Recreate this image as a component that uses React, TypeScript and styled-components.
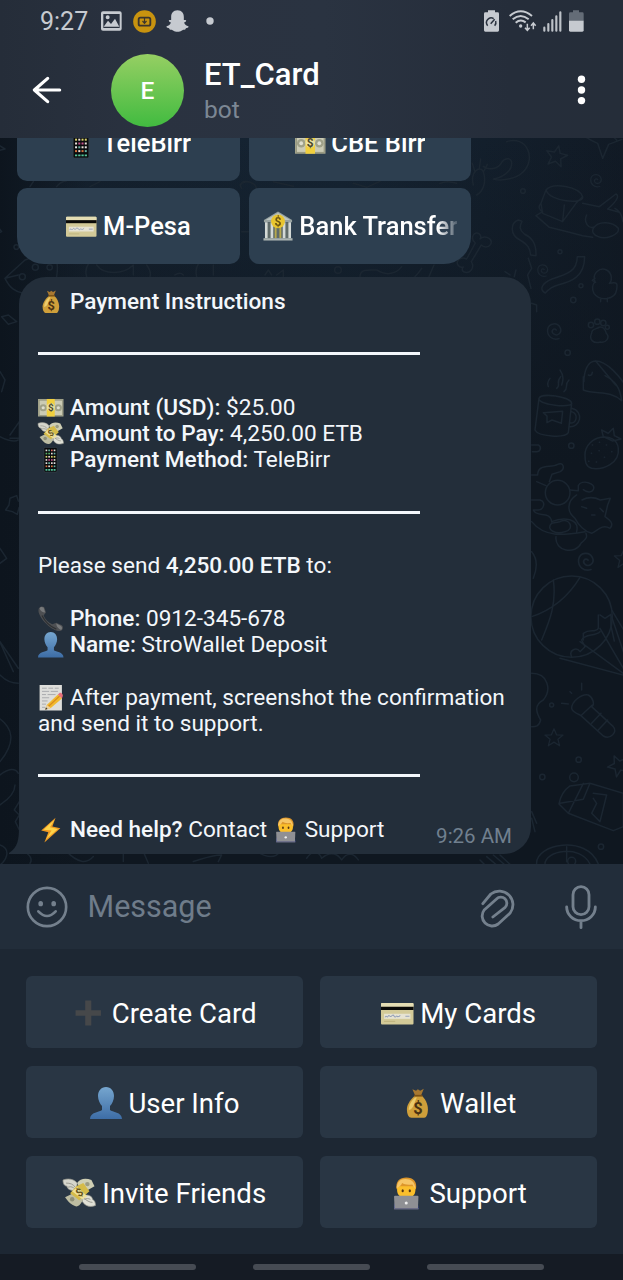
import React from "react";
import styled, { createGlobalStyle } from "styled-components";

const GlobalStyle = createGlobalStyle`
  * { box-sizing: border-box; }
  body {
    margin: 0;
    background: #1d2733;
    font-family: Roboto, "Noto Sans", sans-serif;
    color: #f3f7fb;
  }
  svg { display: block; flex: none; }
`;

/* ---------- layout ---------- */

const Screen = styled.div`
  width: 623px;
  height: 1280px;
  display: flex;
  flex-direction: column;
  overflow: hidden;
`;

const Header = styled.header`
  flex: none;
  height: 138px;
  background: linear-gradient(90deg, #252d39 0%, #2a3240 24%, #2a3341 52%, #252d3a 82%, #252d39 100%);
`;

const StatusBar = styled.div`
  height: 42px;
  padding: 0 39px 0 40px;
  display: flex;
  align-items: center;
  color: #c6cad0;
`;

const Clock = styled.span`
  font-size: 25px;
  line-height: 30px;
  width: 49px;
  margin-top: 2px;
  white-space: nowrap;
`;

const StatusIcon = styled.svg<{ $gap: number }>`
  margin-left: ${(p) => p.$gap}px;
`;

const Spacer = styled.div`
  flex: 1;
`;

const TitleBar = styled.div`
  height: 96px;
  padding: 0 37px 0 32px;
  display: flex;
  align-items: center;
`;

const Avatar = styled.div`
  width: 73px;
  height: 73px;
  margin-left: 49px;
  border-radius: 50%;
  display: flex;
  align-items: center;
  justify-content: center;
  background: linear-gradient(#96cf63, #41bb40);
  color: #fff;
  font-size: 24.5px;
  font-weight: 500;
`;

const TitleText = styled.div`
  flex: 1;
  margin: 2px 0 0 20px;
`;

const Title = styled.div`
  font-size: 31px;
  line-height: 34px;
  font-weight: 500;
  color: #fff;
`;

const Subtitle = styled.div`
  font-size: 24.5px;
  line-height: 30px;
  margin-top: 3px;
  color: #7c8794;
`;

const Chat = styled.main`
  position: relative;
  flex: none;
  height: 726px;
  padding: 0 0 10px 17px;
  display: flex;
  flex-direction: column;
  justify-content: flex-end;
  overflow: hidden;
  background: linear-gradient(90deg, #0d151e 0%, rgba(13, 21, 30, 0) 14%),
    linear-gradient(180deg, rgba(15, 23, 32, 0) 0%, #0f1720 45%),
    linear-gradient(90deg, #14202d 0%, #152433 55%, #111a25 100%);
`;

const Doodles = styled.svg`
  position: absolute;
  inset: 0;
  fill: none;
  stroke: #1b2631;
  stroke-width: 4.5;
  stroke-linecap: round;
  stroke-linejoin: round;
`;

const InlineKeyboard = styled.div`
  position: relative;
  flex: none;
  display: grid;
  grid-template-columns: 223px 222px;
  grid-auto-rows: 76px;
  gap: 7px 9px;
  margin-bottom: 13px;
`;

const InlineButton = styled.button<{ $corner?: "left" | "right" }>`
  border: 0;
  padding: 0 14px;
  background: #2d3f50;
  border-radius: 10px;
  border-bottom-left-radius: ${(p) => (p.$corner === "left" ? 27 : 10)}px;
  border-bottom-right-radius: ${(p) => (p.$corner === "right" ? 27 : 10)}px;
  color: #fff;
  font: 500 25.5px/30px Roboto, "Noto Sans", sans-serif;
  display: flex;
  align-items: center;
  justify-content: center;
  overflow: hidden;
`;

const InlineLabel = styled.span<{ $fade?: boolean }>`
  min-width: 0;
  overflow: hidden;
  white-space: nowrap;
  mask-image: ${(p) => (p.$fade ? "linear-gradient(90deg, #000 90%, transparent 102%)" : "none")};
`;

const Bubble = styled.article`
  position: relative;
  flex: none;
  width: 512px;
  height: 577px;
  margin-left: 2px;
  padding: 12px 19px 0;
  border-radius: 27px 27px 27px 0;
  background: #232e3a;
`;

const Tail = styled.svg`
  position: absolute;
  left: -10px;
  bottom: 0;
`;

const Line = styled.p`
  margin: 0;
  height: 26.38px;
  font-size: 22.6px;
  line-height: 26.38px;
  white-space: nowrap;

  b { font-weight: 500; }
  svg { margin-right: 0.8px; }
`;

const Rule = styled.div`
  height: 26.38px;
  padding-top: 10.5px;

  &::after {
    content: "";
    display: block;
    width: 382px;
    height: 3px;
    background: #f3f7fb;
  }
`;

const Time = styled.time`
  position: absolute;
  right: 19px;
  bottom: 6px;
  font-size: 20.5px;
  line-height: 24px;
  color: #71808f;
`;

const Glyph = styled.svg<{ $size: number; $drop: number }>`
  display: inline-block;
  width: ${(p) => p.$size}px;
  height: ${(p) => p.$size}px;
  vertical-align: ${(p) => -p.$drop}px;
  overflow: visible;
`;

const Composer = styled.div`
  flex: none;
  height: 85px;
  padding: 1px 26px 0;
  display: flex;
  align-items: center;
  background: #222d3a;
`;

const Placeholder = styled.span`
  flex: 1;
  margin-left: 19.5px;
  font-size: 30.5px;
  line-height: 36px;
  color: #6f7c8a;
`;

const MicSlot = styled.div`
  margin-left: 48px;
`;

const Keyboard = styled.div`
  flex: none;
  height: 305px;
  padding: 27px 26px 0;
  display: grid;
  grid-template-columns: 1fr 1fr;
  grid-auto-rows: 72px;
  gap: 18px 17px;
  background: #1d2733;
`;

const Key = styled.button`
  border: 0;
  border-radius: 6px;
  padding: 4px 0 0;
  background: #293644;
  color: #fff;
  font: 400 27.6px/36px Roboto, "Noto Sans", sans-serif;
  white-space: nowrap;
`;

const NavBar = styled.nav`
  flex: none;
  height: 26px;
  display: flex;
  justify-content: center;
  gap: 57px;
  padding-top: 10px;
  background: #151b24;
`;

const NavPill = styled.span`
  width: 117px;
  height: 6px;
  border-radius: 3px;
  background: #464b53;
`;

/* ---------- emoji ---------- */

type EmojiName =
  | "bag" | "note" | "wings" | "mobile" | "receiver" | "person"
  | "memo" | "bolt" | "tech" | "card" | "bank" | "plus";

const art: Record<EmojiName, React.ReactNode> = {
  bag: (
    <g transform="translate(2.200 .8) scale(.9 .95)">
      <path d="M10 1.500 14 3 16 1.500 18.500 3 22.500 1 19.500 8 13 8Z" fill="#a87830" />
      <path d="M13 8h7c4 3 7 9 7 14 0 6-2 9-4 9H9c-3 0-5-3-5-9 0-5 5-11 9-14Z" fill="#cf9f3a" />
      <path d="M13 10c-4 3-7 8-7 13 6-1 6-9 9-13Z" fill="#eccb6c" />
      <path d="M12 8.200h9" stroke="#7b5014" strokeWidth="1.800" />
      <text x="16" y="27" textAnchor="middle" fontSize="18" fontWeight="700" fill="#4a3212" fontFamily="Roboto, sans-serif">$</text>
    </g>
  ),
  note: (
    <>
      <rect x="0" y="5" width="32" height="22" fill="#a3a48b" />
      <rect x="1.500" y="6.500" width="29" height="19" fill="#cbcbb5" stroke="#8f917a" strokeWidth=".8" />
      <circle cx="6.500" cy="16" r="4.500" fill="#9fa189" />
      <circle cx="25.500" cy="16" r="4.500" fill="#9fa189" />
      <circle cx="6.500" cy="16" r="2" fill="#deded0" />
      <circle cx="25.500" cy="16" r="2" fill="#deded0" />
      <rect x="11" y="5" width="10" height="22" fill="#f0cf3e" />
      <circle cx="16" cy="15.500" r="5" fill="#e9dfa0" />
      <text x="16" y="20" textAnchor="middle" fontSize="12.500" fontWeight="700" fill="#4d4a2b" fontFamily="Roboto, sans-serif">$</text>
    </>
  ),
  wings: (
    <>
      <path d="M0 3c5-2 11-1 14 3l-1 7C8 14 4 12 4 9 1 9 0 6 0 3Z" fill="#d6d6cc" stroke="#9a9a90" strokeWidth=".7" />
      <path d="M32 28c-5 2-10 1-13-4l1-6c5-1 9 1 9 4 2 1 3 3 3 6Z" fill="#e0e0d6" stroke="#9a9a90" strokeWidth=".7" />
      <path d="M3 6c4 0 7 1 9 4M5 10c3-1 5 0 7 2M29 25c-3 0-6-2-8-4M27 22c-2-1-4-1-6 0" stroke="#96968c" strokeWidth=".9" fill="none" />
      <path d="M14 6c3-5 9-5 14-3l3 6-12 7Z" fill="#cfcfb4" />
      <path d="m2 20 10-5 8 7c-2 4-4 7-7 7-5-1-8-5-11-9Z" fill="#bdbda2" />
      <path d="m13 9 7-3 6 8-10 9-9-7Z" fill="#d5bb48" />
      <path d="m14 10 10 9-5 3-10-8Z" fill="#efe19a" />
      <circle cx="24" cy="7" r="2.200" fill="#9b9c83" />
      <circle cx="9" cy="22" r="2.200" fill="#8f9078" />
      <text x="16" y="19" textAnchor="middle" fontSize="11" fontWeight="700" fill="#66551c" fontFamily="Roboto, sans-serif" transform="rotate(-35 16 15)">$</text>
    </>
  ),
  mobile: (
    <>
      <rect x="7.500" y="0.500" width="16.500" height="31" rx="1.600" fill="#090b0d" stroke="#39434a" strokeWidth=".8" />
      {["#d6625a", "#5bb46a", "#d9d36c", "#c44f8a", "#e8e8e8", "#d8733e"].map((c, r) =>
        [0, 1, 2, 3].map((k) => (
          <rect key={`${r}-${k}`} x={9.5 + k * 3.4} y={3.2 + r * 4} width="2.100" height="2.100"
            fill={(r + k) % 3 === 0 ? "#e9ded8" : (r * 2 + k) % 4 === 1 ? "#67b2a4" : c} />
        ))
      )}
      <path d="M9.400 28.700h2.400M12.800 28.700h2.400M16.200 28.700h2.400M19.600 28.700h2.400" stroke="#54c49a" strokeWidth="2" />
    </>
  ),
  receiver: (
    <>
      <path d="M1 3c2-3 5-3 7-1l2 6-3 4c2 5 6 9 11 11l5-2 7 3c2 2 2 5-1 7-4 2-12-2-18-8C4 16-1 8 1 3Z" fill="#4d4f52" />
      <path d="M2 3c1-2 3-2 5-1l2 6c-3 0-6-2-7-5ZM23 22l6 3c2 2 1 4 0 5-3-1-6-4-6-8Z" fill="#77797b" />
      <path d="M5 12c4 8 10 14 18 17" stroke="#2f3133" strokeWidth="1.600" fill="none" />
    </>
  ),
  person: (
    <>
      <defs>
        <linearGradient id="person" x1="0" y1="0" x2="0" y2="1">
          <stop offset="0" stopColor="#76a6cf" />
          <stop offset="1" stopColor="#3d6da6" />
        </linearGradient>
      </defs>
      <path d="M16 0c5 0 8 4 8 9 0 4-2 8-4 10v4c2 2 12 2 12 9H0c0-7 10-7 12-9v-4c-2-2-4-6-4-10 0-5 3-9 8-9Z" fill="url(#person)" />
    </>
  ),
  memo: (
    <>
      <path d="M2 0h28v32H2Z" fill="#dededb" />
      <path d="M5 4h6m2 0h6m2 0h5M5 8h9m2 0h9M5 12h5m2 0h10M5 16h9M5 20h7M5 24h5M5 28h4" stroke="#a4a5a8" strokeWidth="1.100" fill="none" />
      <path d="m11 25 14-13 5 5-14 12-7 2Z" fill="#f1b92e" />
      <path d="m13 27 14-13" stroke="#d98b1c" strokeWidth="1.600" />
      <path d="m25 12 2-2c2-1 5 2 4 4l-1 3Z" fill="#e8707c" />
      <path d="m11 25 5 4-7 2Z" fill="#ecd2a2" />
      <path d="m10 28-1 3 3-1Z" fill="#333" />
    </>
  ),
  bolt: (
    <>
      <path d="M22 1 4 17l9 2L8 32 28 14l-10-2Z" fill="#f09a22" />
      <path d="M21 3 7 16l10 1-7 11 15-13-10-2Z" fill="#fdd349" />
    </>
  ),
  tech: (
    <>
      <path d="M4 31.500c0-7 2-11 12-11s12 4 12 11Z" fill="#3d49a5" />
      <path d="M6.500 12C5 4 10 .5 16 .5c7 0 11 4 9.500 11.500Z" fill="#dd962a" />
      <path d="M7 9h18v4c0 5-4 8-9 8s-9-3-9-8Z" fill="#fbbf2b" />
      <path d="M6.500 11C7 5 10 2 15 2c6 0 9.500 3 10 9-1.500 0-2-2-3-3.500C17 8 14 7.500 12 6c-1 2.500-3 4-5.500 5Z" fill="#f6c667" />
      <ellipse cx="12.500" cy="13.500" rx="1.100" ry="1.500" fill="#543414" />
      <ellipse cx="19.500" cy="13.500" rx="1.100" ry="1.500" fill="#543414" />
      <path d="M5.500 18.500h21c1 0 1.500 0 1.500 1L27.500 31h-23L4 19.500c0-1 .5-1 1.500-1Z" fill="#8f9094" />
      <path d="M4 30.500h24V32H4Z" fill="#6b6c85" />
      <circle cx="16" cy="25.500" r="1.500" fill="#eee" />
    </>
  ),
  card: (
    <>
      <rect x="0" y="6" width="32" height="21" rx="1" fill="#d3ca98" />
      <rect x="0" y="6" width="32" height="4" rx="1" fill="#e4ddb3" />
      <rect x="0" y="9.600" width="32" height="3.200" fill="#0a0a08" />
      <rect x="3" y="16.500" width="26" height="5" fill="#e6e3d2" />
      <path d="M4 20c1-3 2 1 3-1s2 1 3 0 2-2 3 0 2-1 3 0 2 0 3-1M24 19h4" stroke="#96a1b8" strokeWidth="1" fill="none" />
      <path d="M3 24h11" stroke="#bfb47e" strokeWidth="1" />
    </>
  ),
  bank: (
    <>
      <path d="M1 9.500 16 .5l15 9v2.500H1Z" fill="#98a3a1" />
      <path d="M3 9.500 16 2 29 9.500Z" fill="#bcc5c2" />
      <rect x="3" y="12" width="26" height="17" fill="#5f6b69" />
      <path d="M3.500 12v17M9.500 12v17M22.500 12v17M28.500 12v17" stroke="#d3d9d6" strokeWidth="2.800" />
      <path d="M13.500 17v12M18.500 17v12" stroke="#b7a94c" strokeWidth="2" />
      <rect x="0.500" y="29" width="31" height="2.500" fill="#aab3b0" />
      <circle cx="16" cy="11" r="7.400" fill="#e8c52f" />
      <text x="16" y="15.800" textAnchor="middle" fontSize="13" fontWeight="700" fill="#6b5410" fontFamily="Roboto, sans-serif">$</text>
    </>
  ),
  plus: <path d="M13 3.500h6v9.500H28.500v5.500H19v9.500h-6v-9.500H3.500V13H13Z" fill="#46484a" />,
};

const Emoji = ({ name, size = 25.5 }: { name: EmojiName; size?: number }) => (
  <Glyph viewBox="0 0 32 32" $size={size} $drop={size * 0.2} aria-hidden="true">
    {art[name]}
  </Glyph>
);

/* ---------- chat wallpaper ---------- */

const star = "M0-30 9-9 32-8 14 7 20 30 0 17-20 30-14 7-32-8-9-9Z";
const spiral = "M4 2c-8-8-18 4-8 12 12 8 26-4 20-18-8-18-34-16-38 4-2 20 14 34 34 28";

const Wallpaper = () => (
  <Doodles width="623" height="726" viewBox="0 138 623 726" aria-hidden="true">
    <g transform="translate(240 135) scale(.3333)">
      <path d={star} transform="translate(950 62) rotate(12)" />
      <path d="M1035 5q25 15 38 20l15 45 18-42 40-15M1110-5l20 20" />
      <path d={spiral} transform="translate(1070 132) scale(.8)" />
      <path d="M800 20c60-20 90 50 50 90-20 20-60 30-90 22 30-5 55-25 55-45 2-20-20-20-30-5-10 20-40 25-55 12" />
      <path d="M700 150c-10-40 20-60 30-40 10 30 0 60-20 70M705 110l-8-25M718 100l4-28M732 108l10-20M600 145q20-10 50 0" />
      <circle cx="849" cy="168" r="7" /><circle cx="960" cy="350" r="6" />
      <path d="M918 165c20-25 100-10 110 20 5 25-100 15-110-20ZM918 165l-15 40 5 30 60 25 40-55 20-20M903 205c-10 10-5 20 5 25l-20 12 40 35 60 15 40 10 30 5M968 260l5-50M1028 205l50 10 50-38c10 5 5 20-25 45l35 10M1040 240c-10 20 5 45 25 35M1060 280c15-25 60-20 75 0 5 20-40 35-60 25-15-5-20-15-15-25ZM1125 220q20 10 24 40" />
      <path d="M835 255c-25 10-25 45 5 60 25 15 30 25 32 45l16 2c2-40-15-55-35-65-15-12-15-22-7-38Z" />
      <path d="M700 300c10-15 28 0 20 12 15-14 40 0 32 16-8 12-22 8-28 2l-30 50c10 15 0 35-18 32-12-2-10-12-6-16-12 4-25-10-14-22 8-8 20-4 24-2l26-48c-8-6-10-16-6-24Z" />
      <path d={spiral} transform="translate(910 402) scale(.75)" />
      <path d="M1012 365h22c0 60-40 75-80 85-20 5-30 15-38 24-20-10-10-30 20-42 50-15 75-25 76-67Z" />
      <path d="M1065 440c-10-25 15-45 35-35 20 12 15 35 8 40 25-5 25 0 22 20-5 30-50 35-68 10-8-15-5-25 3-35ZM1065 430l-8 6 10 6M1082 490v10M1102 490v10" />
      <circle cx="1023" cy="452" r="6" /><circle cx="1000" cy="495" r="8" /><circle cx="983" cy="653" r="8" />
      <path d={spiral} transform="translate(945 583)" />
      <path d="M1055 595c0-15 15-12 22-18 12-4 20 8 22 18 12 12 0 30-18 26-20 6-35-6-26-26Z" />
      <circle cx="1053" cy="570" r="8" /><circle cx="1072" cy="560" r="8" /><circle cx="1090" cy="564" r="8" /><circle cx="1102" cy="577" r="6" />
      <path d="M1032 740c0-30 10-62 35-62 35 0 75 50 90 75M1067 678l60 72M1045 720q10 5 12-8M960 705q15 20 5 45M865 370l10 30-12 20 10 40M810 420l-15-10M823 425l5-20M875 505l15 5v20" />
      <path d="M360 425c0-25 30-20 50-20 30 20 60 10 75-10M545 400q-10 15-20 25M582 390l-15 35M75 420l10-15 10 15M110 420l20-15v20" />
      <circle cx="294" cy="405" r="10" />
      <path d="M0 150c20-20 50-5 50 15M100 140l60 14M340 145l40 12 40-18" />
    </g>
    <g transform="translate(400 380) scale(.3333)">
      <path d="M417 55c5-18 95-5 98 15 0 15-100 5-98-15ZM417 55l-12 95c10 20 90 25 100 8l10-88M515 85c40 10 25 60-8 55M515 95c22 8 15 36-6 34" />
      <path d="M430 98l58-4-4 36-28-10-15 8v-20ZM445 20q-5-12 5-25M470 25c15-12-5-15 12-35M492 35c15-12 0-20 15-35M550-10v40c40 15 80 0 115 32-5-40-20-60-50-75" />
      <path d="M555 225c0-60 95-75 100-20 5 45-45 65-80 60-18-5-20-20-20-40ZM610 170l-5-20 20 10 15-15 3 22 20 10-25 6Z" />
      <path d="M577 195h1m20-8h1m20 8h1m15 20h1m-62 5h1m22-8h1m15 20h1m-48 12h1m22 2h1" />
      <circle cx="514" cy="197" r="8" />
      <path d="M395 195h20c12 8 5 22-8 20h-10M395 285h18c0-35 40-20 60-32 15-8 25 10 8 22l-25 8-8 22M410 305l28 12" />
      <circle cx="473" cy="338" r="37" />
      <path d="M510 330l25 2v-15c10-20 55-8 45 12-5 10-20 8-30 0M530 345c-30 20-30 50-5 70 10 20 30 40 50 45 15-5 30-30 55-15 15-15-5-28-15-35l8-35 8-20-30 5c-20-10-40-8-55 0M545 380l15 5M575 405h10M600 385l10 10M395 360h25c20 5 10 30-5 30h-15c10 25 50 0 55 35 35-15 85-10 75 30M455 430c-20 20 15 35 40 25 30-5 15-45-15-30ZM395 425c40 50 100 40 160 30M468 470c-5 45 60 55 75 20 15-15 20-15 15-30" />
      <path d={spiral} transform="translate(560 538) scale(1.1)" />
      <path d={star} transform="translate(672 535) scale(.9)" />
      <circle cx="515" cy="710" r="122" />
      <path d="M460 600c10 70-10 120-35 180M395 710c60-20 110-60 145-118M600 705l15 10 18-12v35l10 45M550 780v-20c20-15 35 0 45-15v-40M635 690l60 100M395 515q25 30 5 80" />
    </g>
    <g transform="translate(400 620) scale(.3333)">
      <path d="M515 110c-10-20 15-30 25-15l15-15-10-20c10-20 40-10 55-25M480 115l190 50M540 65l130 95M600 25l70 120M635-10l40 120M395 160c50 0 60 50 35 80-30 15-20 40-8 60-5 20-15 20-27 20M545 190v20M510 215l5 5M485 250l20 2" />
      <path d="M515 265c0-20 30-45 50-40 15 8 20 30 10 35l65 60c15 15-10 40-30 28l-68-62c-10-5-25-10-27-21ZM545 285l32-30M575 310l28-30M595 330l28-30" />
      <path d={star} transform="translate(462 352) scale(.85)" />
      <path d={star} transform="translate(655 435) rotate(-25) scale(1)" />
      <circle cx="536" cy="419" r="8" /><circle cx="427" cy="471" r="8" /><circle cx="522" cy="472" r="13" /><circle cx="603" cy="680" r="8" /><circle cx="455" cy="255" r="6" />
      <path d="M510 498l60-8 100 30v100l-30 12-135-52-28-28c5-25 20-45 33-54ZM505 580l45-90M480 550l70-12 20-48M580 520l40 5-20 80-25-25 15-30-10-15M395 575l15 35M395 595l10 40" />
      <path d="M410 732c-5-60 150-90 185 0M435 732c0-40 105-60 135 0M500 680v45M240 720l15 15M260 710l30 25M280 705l35 30M300 705l30 28" />
      <circle cx="515" cy="724" r="12" />
    </g>
    <g transform="translate(0 135) scale(.3333)">
      <path d="M-20 20 15 42l-30 8M-10 270l15 20-20 8M15 430l60-55 45-15c60 0 55 30 50 65M15 430c15 30 30 40 55 45M15 430l40-10" />
      <circle cx="67" cy="425" r="9" /><circle cx="106" cy="397" r="9" /><circle cx="149" cy="397" r="8" /><circle cx="49" cy="336" r="7" />
      <path d="M90 155l10-15M170 155q10-15 30-18M270 155l30-15M260 425c-5-15 0-30 5-38M290 390c20 30 80 30 110 0v30M440 390q15 20 10 35M590 425c-5-20 0-30 5-38M640 390v30M525 420q15-10 25 0M5 545l20-5 25 20-25 8ZM725 160c-10-15 5-25 22-20M725 290h20" />
      <path d="M-20 700l20 10 15 25-10 35M0 905q40 20 55 10M30 900l28-40v50H30M30 1090l20-8 5 16 20 5-18 15-5 20-15-8-20-5 10-15ZM0 1240l20 30-20 15" />
      <path d="M-10 1500l50 110M0 1520l55 80M0 1620c20 20 40 25 55 25M-10 1745q80 50 10 135M0 1920q40-30 55-5M0 2010q45-30 45-60M0 2130c30 10 25 40 0 60M58 2000l-15 25 15 15-12 20 12 25" />
      <path d="M80 2155q20 15 10 30M200 2150q50 50 80 15M370 2150v30M430 2150l15 35M580 2180c20-5 50-20 85-20l-10 20M770 2150q50 30 70 0M920 2170c20-30 40-15 45 0 30-25 50-10 60 5 20-30 40-15 50 0" />
    </g>
  </Doodles>
);

/* ---------- screen ---------- */

export default function App() {
  return (
    <>
      <GlobalStyle />
      <Screen>
        <Header>
          <StatusBar>
            <Clock>9:27</Clock>
            <StatusIcon $gap={12} width="21" height="20" viewBox="303 32 63 60">
              <path fillRule="evenodd" fill="currentColor" d="M309 33h50q6 0 6 6v46q0 6-6 6h-50q-6 0-6-6V39q0-6 6-6Zm1 8v42h49V41Zm1 38 13-18 9 10 12-16 13 24Zm6-28a6 6 0 1 0 12 0 6 6 0 1 0-12 0Z" />
            </StatusIcon>
            <StatusIcon $gap={11} width="23" height="23" viewBox="399 28 69 69">
              <circle cx="433.500" cy="62.500" r="34" fill="#c8930f" />
              <rect x="416" y="51" width="35" height="24" rx="5" fill="none" stroke="#3b352d" strokeWidth="5.500" />
              <path d="M433.500 50v17m-6-6 6 7 6-7" fill="none" stroke="#3b352d" strokeWidth="3.500" />
            </StatusIcon>
            <StatusIcon $gap={10} width="23" height="22" viewBox="499 30 68 66">
              <path fill="currentColor" d="M533 31c13 0 19 9 19 20v9c3 0 7-1 7 2s-6 4-6 6c2 6 6 9 13 11 1 5-5 5-8 6-1 3-1 4-4 4-7-1-9 6-21 6s-14-7-21-6c-3 0-3-1-4-4-3-1-9-1-8-6 7-2 11-5 13-11 0-2-6-3-6-6s4-2 7-2v-9c0-11 6-20 19-20Z" />
            </StatusIcon>
            <StatusIcon $gap={17} width="8" height="8" viewBox="0 0 8 8">
              <circle cx="4" cy="4" r="3.700" fill="currentColor" />
            </StatusIcon>
            <Spacer />
            <StatusIcon $gap={0} width="15" height="22" viewBox="516 29 45 66">
              <path fill="currentColor" d="M528 30h21v6h8q4 0 4 4v50q0 4-4 4h-37q-4 0-4-4V40q0-4 4-4h8Z" />
              <path d="M527 76a14 14 0 0 1 18-21M551 62a14 14 0 0 1-3 14M536 70l12-13" fill="none" stroke="#2a323f" strokeWidth="4.500" />
            </StatusIcon>
            <StatusIcon $gap={10} width="28" height="22" viewBox="590 29 84 66">
              <path d="M592 47q33-28 67 0M601 57q24-20 48 0M610 67q15-12 30-1" fill="none" stroke="currentColor" strokeWidth="6" />
              <circle cx="625" cy="77" r="5" fill="currentColor" />
              <path d="M645 70v19m-7-7 7 8 7-8M663 87V68m-7 8 7-8 7 8" fill="none" stroke="currentColor" strokeWidth="4.500" />
            </StatusIcon>
            <StatusIcon $gap={6} width="19" height="21" viewBox="694 33 57 63">
              <path d="M698 92V83M710 92V72M722 92V60M734 92V49M746 92V37" stroke="currentColor" strokeWidth="6.500" strokeLinecap="round" opacity=".95" />
            </StatusIcon>
            <StatusIcon $gap={7.5} width="15" height="22" viewBox="775 29 45 66">
              <path fill="#646c77" d="M787 30h18v6h10q4 0 4 4v22h-44V40q0-4 4-4h8Z" />
              <path fill="currentColor" d="M775 61h44v29q0 4-4 4h-36q-4 0-4-4Z" />
            </StatusIcon>
          </StatusBar>
          <TitleBar>
            <svg width="30" height="28" viewBox="97 228 90 84" fill="none" stroke="#fff" strokeWidth="9.500" strokeLinecap="round" strokeLinejoin="round">
              <path d="M180 270h-76M144 235l-40 35 40 35" />
            </svg>
            <Avatar>E</Avatar>
            <TitleText>
              <Title>ET_Card</Title>
              <Subtitle>bot</Subtitle>
            </TitleText>
            <svg width="9" height="30" viewBox="0 0 9 30" fill="#fff">
              <circle cx="4.500" cy="4.300" r="3.700" />
              <circle cx="4.500" cy="15" r="3.700" />
              <circle cx="4.500" cy="25.600" r="3.700" />
            </svg>
          </TitleBar>
        </Header>

        <Chat>
          <Wallpaper />
          <InlineKeyboard>
            <InlineButton><InlineLabel><Emoji name="mobile" size={30.5} /> TeleBirr</InlineLabel></InlineButton>
            <InlineButton><InlineLabel><Emoji name="note" size={30.5} /> CBE Birr</InlineLabel></InlineButton>
            <InlineButton $corner="left"><InlineLabel><Emoji name="card" size={30.5} /> M-Pesa</InlineLabel></InlineButton>
            <InlineButton $corner="right"><InlineLabel $fade><Emoji name="bank" size={30} /> Bank Transfer</InlineLabel></InlineButton>
          </InlineKeyboard>

          <Bubble>
            <Tail width="11" height="28" viewBox="0 0 11 28">
              <path d="M11 0h-1c0 14-1 21-10 27v1h11Z" fill="#232e3a" />
            </Tail>
            <Line><Emoji name="bag" /> <b>Payment Instructions</b></Line>
            <Line />
            <Rule />
            <Line />
            <Line><Emoji name="note" /> <b>Amount (USD):</b> $25.00</Line>
            <Line><Emoji name="wings" /> <b>Amount to Pay:</b> 4,250.00 ETB</Line>
            <Line><Emoji name="mobile" /> <b>Payment Method:</b> TeleBirr</Line>
            <Line />
            <Rule />
            <Line />
            <Line>Please send <b>4,250.00 ETB</b> to:</Line>
            <Line />
            <Line><Emoji name="receiver" /> <b>Phone:</b> 0912-345-678</Line>
            <Line><Emoji name="person" /> <b>Name:</b> StroWallet Deposit</Line>
            <Line />
            <Line><Emoji name="memo" /> After payment, screenshot the confirmation</Line>
            <Line>and send it to support.</Line>
            <Line />
            <Rule />
            <Line />
            <Line><Emoji name="bolt" /> <b>Need help?</b> Contact <Emoji name="tech" /> Support</Line>
            <Time>9:26 AM</Time>
          </Bubble>
        </Chat>

        <Composer>
          <svg width="42" height="42" viewBox="77 411 126 126" fill="none" stroke="#74808d" strokeWidth="8" strokeLinecap="round">
            <circle cx="140" cy="474" r="57.500" />
            <path d="M114 487q26 28 52 0" />
            <ellipse cx="121" cy="464" rx="7" ry="8" fill="#74808d" stroke="none" />
            <ellipse cx="160" cy="464" rx="7" ry="8" fill="#74808d" stroke="none" />
          </svg>
          <Placeholder>Message</Placeholder>
          <svg width="38" height="43" viewBox="180 108 111 129" fill="none" stroke="#74808d" strokeWidth="8.500" strokeLinecap="round" strokeLinejoin="round">
            <path d="M190 161 214 132A41 41 0 0 1 272 189L236 222A30 30 0 0 1 194 180L231 147A18 18 0 0 1 257 172L220 201" />
          </svg>
          <MicSlot>
            <svg width="32" height="46" viewBox="436 105 96 138" fill="none" stroke="#74808d" strokeWidth="8.500" strokeLinecap="round">
              <rect x="460" y="113" width="48" height="84" rx="24" />
              <path d="M441 174a43 41 0 0 0 86 0M484 216v20" />
            </svg>
          </MicSlot>
        </Composer>

        <Keyboard>
          <Key><Emoji name="plus" size={32.5} /> Create Card</Key>
          <Key><Emoji name="card" size={32.5} /> My Cards</Key>
          <Key><Emoji name="person" size={32} /> User Info</Key>
          <Key><Emoji name="bag" size={32.5} /> Wallet</Key>
          <Key><Emoji name="wings" size={32.5} /> Invite Friends</Key>
          <Key><Emoji name="tech" size={32.5} /> Support</Key>
        </Keyboard>

        <NavBar>
          <NavPill />
          <NavPill />
          <NavPill />
        </NavBar>
      </Screen>
    </>
  );
}
